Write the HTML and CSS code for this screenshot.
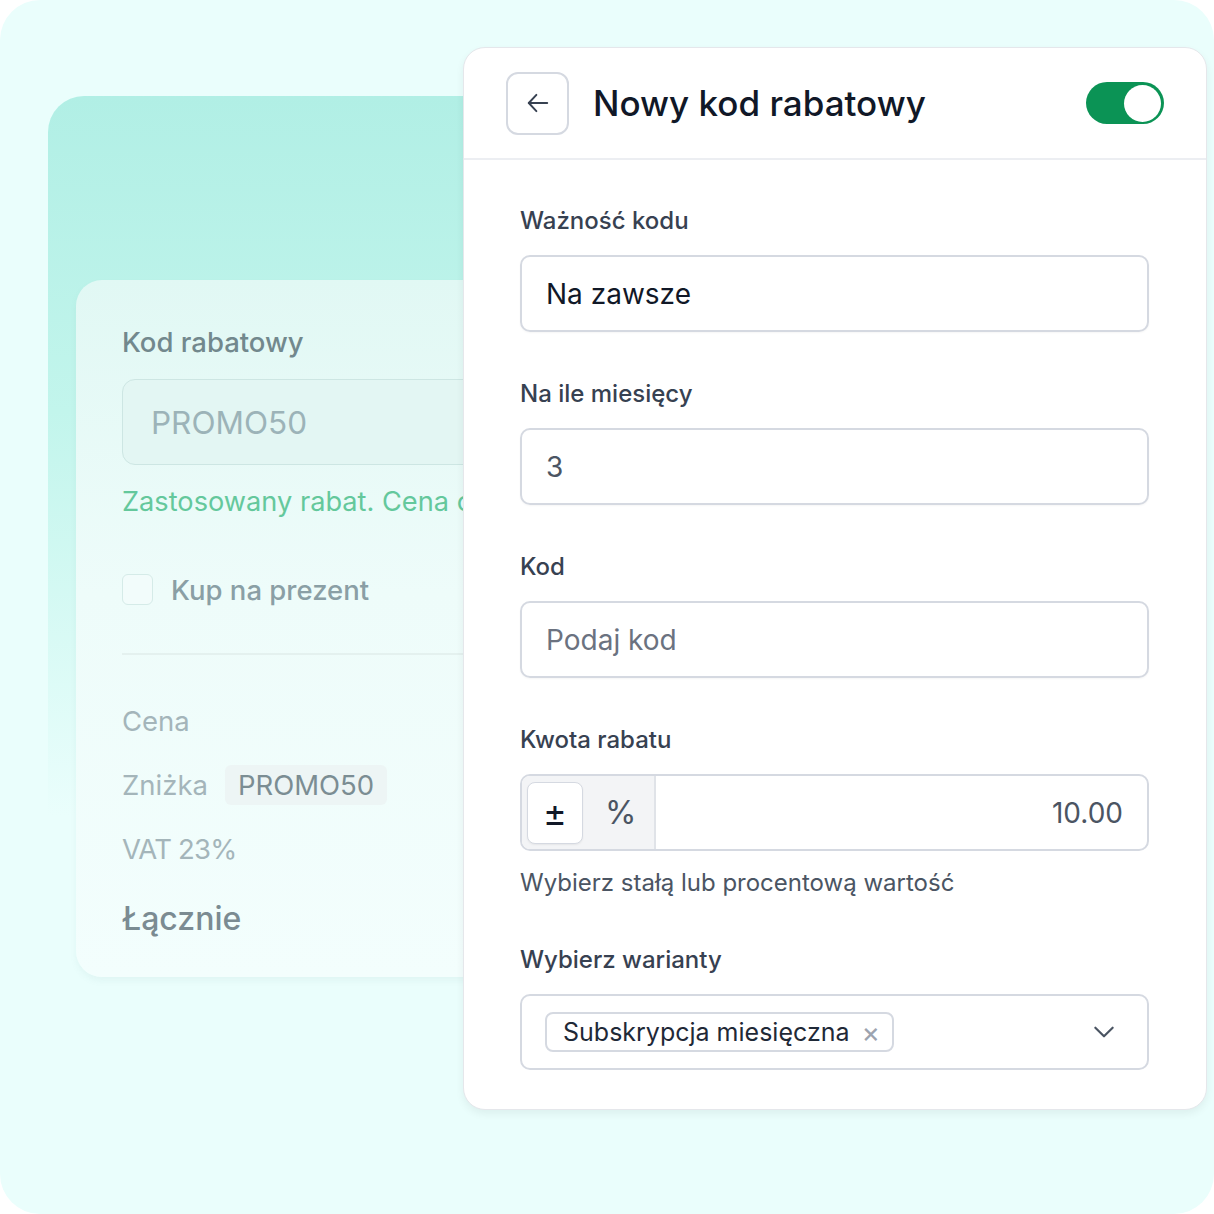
FILE: index.html
```html
<!DOCTYPE html>
<html lang="pl">
<head>
    <meta charset="UTF-8">
    <meta name="viewport" content="width=device-width, initial-scale=1.0">
    <title>Nowy kod rabatowy</title>
    <link rel="stylesheet" href="styles.css">
</head>
<body>

    <div class="canvas">

        <!-- podgląd koszyka w tle -->
        <div class="backdrop">
            <div class="cart-card">
                <div class="cart-label">Kod rabatowy</div>
                <div class="cart-input">PROMO50</div>
                <div class="cart-success">Zastosowany rabat. Cena całkowita obniżona</div>

                <div class="cart-gift">
                    <span class="cart-checkbox"></span>
                    <span>Kup na prezent</span>
                </div>

                <div class="cart-summary">
                    <div class="cart-row">Cena</div>
                    <div class="cart-row">Zniżka <span class="cart-chip">PROMO50</span></div>
                    <div class="cart-row cart-vat">VAT 23%</div>
                    <div class="cart-row cart-total">Łącznie</div>
                </div>
            </div>
        </div>

        <!-- formularz nowego kodu -->
        <div class="panel">
            <div class="panel-header">
                <button class="back-btn" aria-label="Wróć">
                    <svg width="26" height="26" viewBox="0 0 24 24" fill="none" stroke="#374151" stroke-width="1.8" stroke-linecap="round" stroke-linejoin="round">
                        <path d="M20.5 12H3.5"/>
                        <path d="M10.5 4.5L3.5 12l7 7.5"/>
                    </svg>
                </button>
                <h1 class="panel-title">Nowy kod rabatowy</h1>
                <span class="toggle"><span class="toggle-knob"></span></span>
            </div>

            <div class="panel-body">
                <div class="field">
                    <label class="field-label">Ważność kodu</label>
                    <div class="input">Na zawsze</div>
                </div>

                <div class="field">
                    <label class="field-label">Na ile miesięcy</label>
                    <div class="input input-muted">3</div>
                </div>

                <div class="field">
                    <label class="field-label">Kod</label>
                    <div class="input input-placeholder">Podaj kod</div>
                </div>

                <div class="field">
                    <label class="field-label">Kwota rabatu</label>
                    <div class="amount">
                        <div class="amount-type">
                            <span class="amount-btn">±</span>
                            <span class="amount-percent">%</span>
                        </div>
                        <div class="amount-value">10.00</div>
                    </div>
                    <div class="field-help">Wybierz stałą lub procentową wartość</div>
                </div>

                <div class="field">
                    <label class="field-label">Wybierz warianty</label>
                    <div class="select">
                        <span class="chip">Subskrypcja miesięczna <span class="chip-x">×</span></span>
                        <svg class="chevron" width="26" height="26" viewBox="0 0 24 24" fill="none" stroke="#4b5563" stroke-width="2" stroke-linecap="round" stroke-linejoin="round">
                            <path d="M4 8l8 8 8-8"/>
                        </svg>
                    </div>
                </div>
            </div>
        </div>

    </div>

</body>
</html>
```

FILE: styles.css
```css
body {
    margin: 0;
    background-color: white;
    font-family: Inter, "Noto Sans", sans-serif;
}

.canvas {
    position: relative;
    width: 1214px;
    height: 1214px;
    border-radius: 40px;
    background-color: #eafefc;
    overflow: hidden;
    box-sizing: border-box;
    padding: 96px 0 0 48px;
}

/* tło z kartą koszyka */
.backdrop {
    width: 620px;
    height: 900px;
    border-radius: 36px 36px 0 0;
    background: linear-gradient(180deg, #b1efe5 0%, #c2f5ec 35%, rgba(234, 254, 252, 0) 80%);
    padding: 184px 0 0 28px;
    box-sizing: border-box;
}

.cart-card {
    width: 600px;
    height: 697px;
    border-radius: 26px;
    background: linear-gradient(180deg, #e1f8f4 0%, #eefcfa 45%, #f3fefd 100%);
    box-shadow: 0 4px 6px rgba(120, 150, 150, 0.08);
    padding: 44px 46px;
    box-sizing: border-box;
    font-size: 27.5px;
}

.cart-label {
    color: #72888d;
    font-weight: 500;
    line-height: 36px;
}

.cart-input {
    margin-top: 19px;
    height: 86px;
    border: 1px solid #cde6e3;
    border-radius: 13px;
    background-color: #e3f6f3;
    box-sizing: border-box;
    padding-left: 28px;
    display: flex;
    align-items: center;
    font-size: 31.5px;
    color: #9cb3b8;
}

.cart-success {
    margin-top: 19px;
    font-size: 27.2px;
    color: #64c89c;
    line-height: 36px;
    white-space: nowrap;
}

.cart-gift {
    margin-top: 54px;
    display: flex;
    align-items: center;
    gap: 18px;
    color: #8a9fa5;
    font-weight: 500;
    height: 31px;
}

.cart-checkbox {
    width: 29px;
    height: 29px;
    border: 1px solid #d5ebe8;
    border-radius: 6px;
    background-color: #f2fcfb;
}

.cart-summary {
    margin-top: 48px;
    border-top: 2px solid #e4f1ef;
    padding-top: 34px;
}

.cart-row {
    color: #a4b5ba;
    height: 64px;
    display: flex;
    align-items: center;
    gap: 17px;
}

.cart-vat {
    letter-spacing: -0.8px;
}

.cart-chip {
    background-color: #edf5f5;
    border-radius: 6px;
    padding: 3px 13px;
    color: #7b8d93;
}

.cart-total {
    font-size: 32px;
    font-weight: 500;
    color: #7b8b92;
    height: 74px;
}

/* panel formularza */
.panel {
    position: absolute;
    left: 463px;
    top: 47px;
    width: 744px;
    height: 1063px;
    background-color: white;
    border: 1px solid #e5e7eb;
    border-radius: 22px;
    box-shadow: 0 4px 8px rgba(0, 0, 0, 0.06);
    box-sizing: border-box;
}

.panel-header {
    height: 112px;
    border-bottom: 2px solid #eceef2;
    display: flex;
    align-items: center;
    padding: 0 42px;
    gap: 24px;
    box-sizing: border-box;
}

.back-btn {
    width: 63px;
    height: 63px;
    border: 2px solid #d5d9e1;
    border-radius: 12px;
    background-color: white;
    display: flex;
    align-items: center;
    justify-content: center;
    padding: 0;
}

.panel-title {
    flex: 1;
    margin: 0;
    font-size: 35px;
    font-weight: 500;
    color: #111827;
}

.toggle {
    width: 78px;
    height: 42px;
    border-radius: 21px;
    background-color: #0b9355;
    display: flex;
    align-items: center;
    justify-content: flex-end;
    padding: 0 3px;
    box-sizing: border-box;
}

.toggle-knob {
    width: 37px;
    height: 37px;
    border-radius: 50%;
    background-color: white;
}

.panel-body {
    padding: 46px 57px 0 56px;
}

.field {
    margin-bottom: 47px;
}

.field-label {
    display: block;
    font-size: 24px;
    line-height: 30px;
    font-weight: 500;
    color: #374151;
    margin-bottom: 19px;
}

.input {
    height: 77px;
    border: 2px solid #d5d9e1;
    border-radius: 10px;
    box-sizing: border-box;
    padding-left: 24px;
    display: flex;
    align-items: center;
    font-size: 28px;
    color: #111827;
    box-shadow: 0 1px 2px rgba(0, 0, 0, 0.04);
}

.input-muted {
    color: #4b5563;
}

.input-placeholder {
    color: #6b7280;
}

.amount {
    height: 77px;
    border: 2px solid #d5d9e1;
    border-radius: 10px;
    box-sizing: border-box;
    display: flex;
    overflow: hidden;
}

.amount-type {
    width: 134px;
    background-color: #f3f4f6;
    border-right: 2px solid #e0e3e8;
    display: flex;
    align-items: center;
    padding-left: 5px;
    gap: 22px;
    box-sizing: border-box;
}

.amount-btn {
    width: 56px;
    height: 62px;
    background-color: white;
    border: 1px solid #d5d9e1;
    border-radius: 8px;
    box-shadow: 0 1px 2px rgba(0, 0, 0, 0.06);
    display: flex;
    align-items: center;
    justify-content: center;
    font-size: 36px;
    color: #111827;
    box-sizing: border-box;
}

.amount-percent {
    font-size: 32px;
    color: #4b5563;
}

.amount-value {
    flex: 1;
    display: flex;
    align-items: center;
    justify-content: flex-end;
    padding-right: 24px;
    font-size: 28px;
    color: #4b5563;
}

.field-help {
    margin-top: 17px;
    font-size: 24px;
    line-height: 30px;
    color: #4b5563;
}

.select {
    height: 76px;
    border: 2px solid #d5d9e1;
    border-radius: 10px;
    box-sizing: border-box;
    display: flex;
    align-items: center;
    justify-content: space-between;
    padding: 0 30px 0 23px;
}

.chip {
    height: 40px;
    border: 2px solid #d5d9e1;
    border-radius: 8px;
    box-sizing: border-box;
    display: flex;
    align-items: center;
    gap: 12px;
    padding: 0 12px 0 16px;
    font-size: 25px;
    color: #1f2937;
}

.chip-x {
    color: #9ca3af;
    font-size: 28px;
}
```
